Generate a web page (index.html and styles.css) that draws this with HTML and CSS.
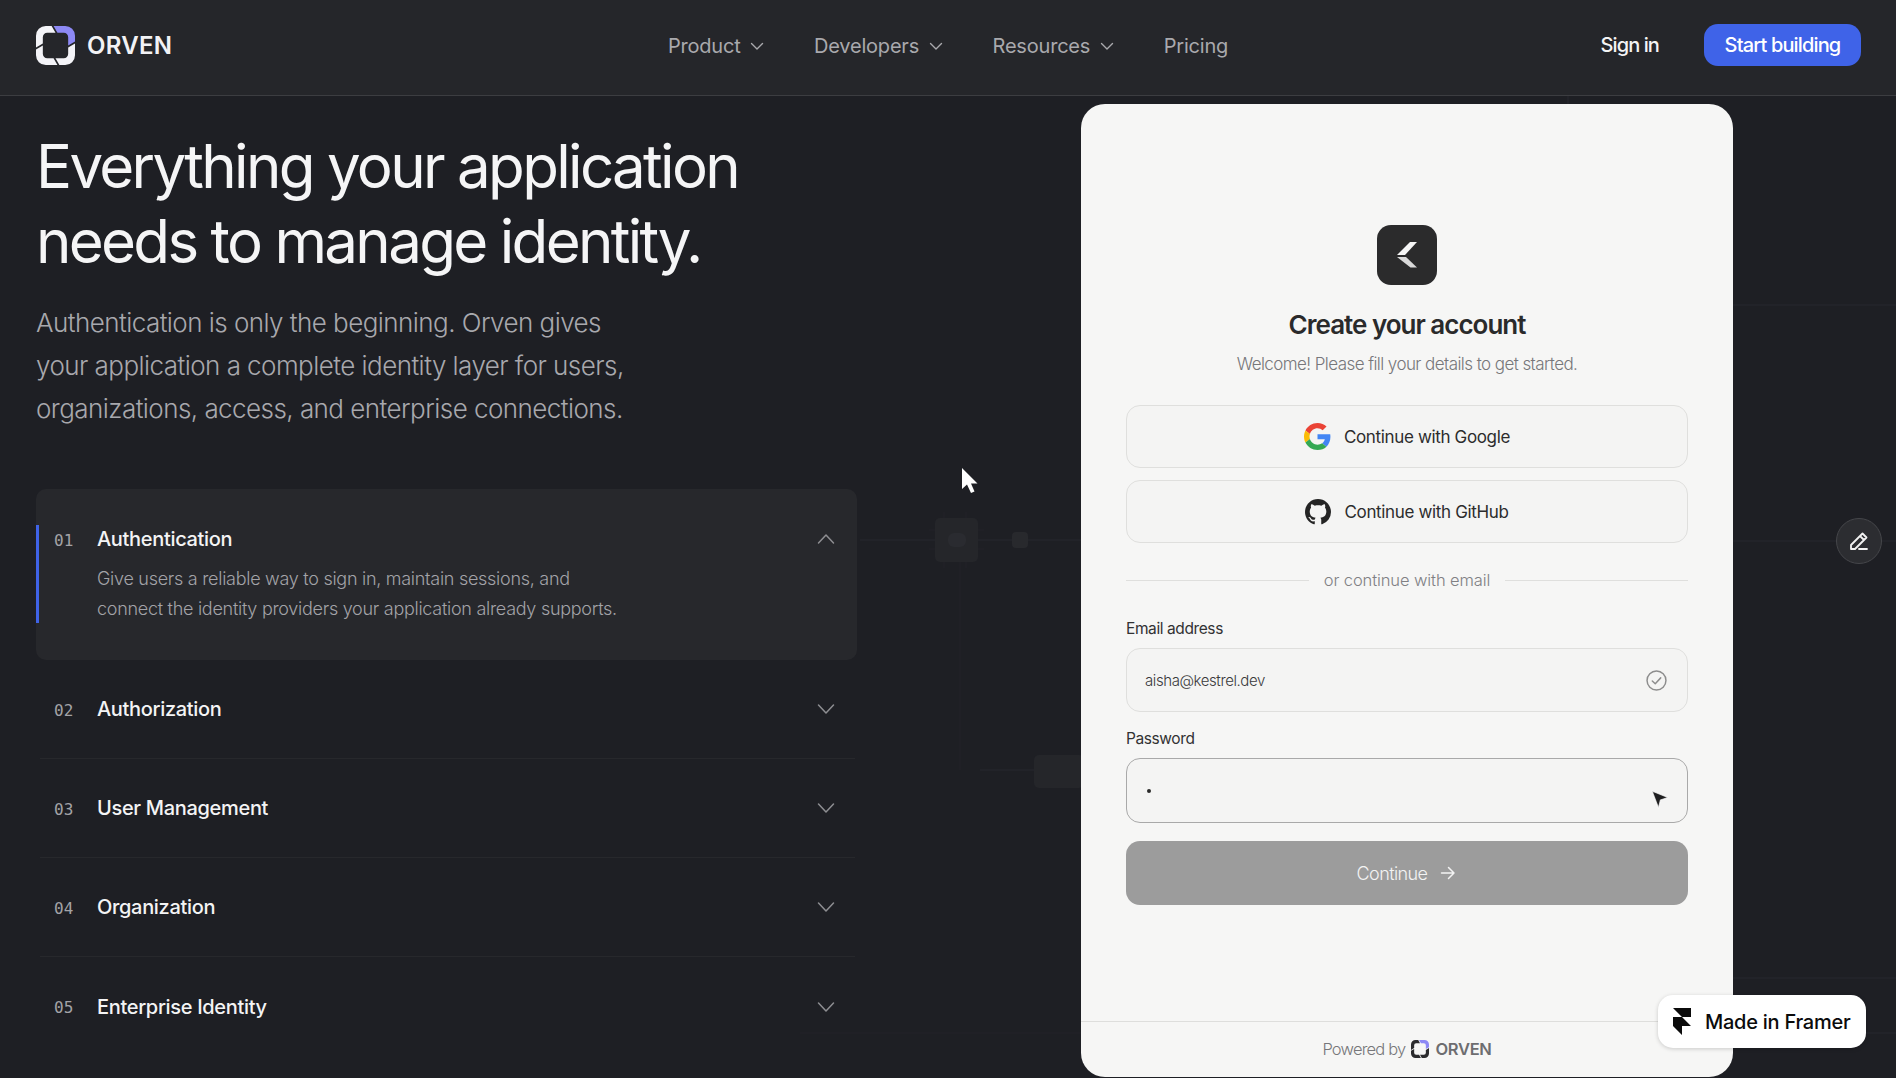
FILE: index.html
```html
<!DOCTYPE html>
<html lang="en">
<head>
<meta charset="utf-8">
<title>Orven</title>
<link rel="stylesheet" href="styles.css">
</head>
<body>
<svg width="0" height="0" class="defs">
  <defs>
    <path id="seg" d="M16 0H10A10 10 0 0 0 0 10V22L7 18V11.5A4.5 4.5 0 0 1 11.5 7H20Z"/>
    <symbol id="chev" viewBox="0 0 16 16"><path d="M2.5 5.5 8 11l5.5-5.5" fill="none" stroke="currentColor" stroke-width="1.4" stroke-linecap="round" stroke-linejoin="round"/></symbol>
    <symbol id="chev-lg" viewBox="0 0 20 20"><path d="M2.5 6 10 14l7.5-8" fill="none" stroke="currentColor" stroke-width="1.5" stroke-linecap="round" stroke-linejoin="round"/></symbol>
  </defs>
</svg>
<div class="page">
  <svg class="decor" viewBox="0 0 1896 1078" width="1896" height="1078" aria-hidden="true">
    <g stroke="#25262b" fill="none" stroke-width="1.5">
      <path d="M860 540H1081M1733 541H1896M1733 305H1896M1733 978H1896M1733 1033H1896M980 770H1034M1568 96V104"/>
    </g>
    <g stroke="#222328" fill="none" stroke-width="1">
      <path d="M960 562V770M800 1033H1081M944 512V568M966 512V568M929 530H984M929 549H984"/>
    </g>
    <rect x="935" y="518" width="43" height="44" rx="5" fill="#25262a"/>
    <rect x="948" y="533" width="18" height="14" rx="6" fill="#2a2b30"/>
    <rect x="1012" y="532" width="16" height="16" rx="4" fill="#28292d"/>
    <rect x="1034" y="755" width="50" height="33" rx="5" fill="#25262a"/>
  </svg>

  <header class="nav">
    <a class="brand">
      <svg class="logo" viewBox="0 0 40 40">
        <use href="#seg" fill="#f4f4f8"/>
        <use href="#seg" fill="#8d89f5" transform="rotate(90 20 20)"/>
        <use href="#seg" fill="#f4f4f8" transform="rotate(180 20 20)"/>
        <use href="#seg" fill="#f4f4f8" transform="rotate(270 20 20)"/>
      </svg>
      <span class="brand-name">ORVEN</span>
    </a>
    <nav class="links">
      <a class="link">Product <svg class="chev"><use href="#chev"/></svg></a>
      <a class="link">Developers <svg class="chev"><use href="#chev"/></svg></a>
      <a class="link">Resources <svg class="chev"><use href="#chev"/></svg></a>
      <a class="link">Pricing</a>
    </nav>
    <div class="actions">
      <a class="signin">Sign in</a>
      <a class="start">Start building</a>
    </div>
  </header>

  <main class="main">
    <section class="left">
      <h1 class="hero">Everything your application<br>needs to manage identity.</h1>
      <p class="lede">Authentication is only the beginning. Orven gives<br>your application a complete identity layer for users,<br>organizations, access, and enterprise connections.</p>
      <div class="accordion">
        <article class="panel">
          <div class="panel-inner">
            <div class="row-head">
              <span class="num">01</span>
              <span class="row-title">Authentication</span>
              <svg class="row-chev up"><use href="#chev-lg"/></svg>
            </div>
            <p class="row-desc">Give users a reliable way to sign in, maintain sessions, and<br>connect the identity providers your application already supports.</p>
          </div>
        </article>
        <article class="row"><div class="row-head"><span class="num">02</span><span class="row-title">Authorization</span><svg class="row-chev"><use href="#chev-lg"/></svg></div></article>
        <article class="row"><div class="row-head"><span class="num">03</span><span class="row-title">User Management</span><svg class="row-chev"><use href="#chev-lg"/></svg></div></article>
        <article class="row"><div class="row-head"><span class="num">04</span><span class="row-title">Organization</span><svg class="row-chev"><use href="#chev-lg"/></svg></div></article>
        <article class="row"><div class="row-head"><span class="num">05</span><span class="row-title">Enterprise Identity</span><svg class="row-chev"><use href="#chev-lg"/></svg></div></article>
      </div>
    </section>

    <section class="card">
      <div class="card-body">
        <div class="tile">
          <svg viewBox="0 0 20 26" width="20" height="26"><path d="M20 0H13L0 13H8Z" fill="#f5f5f5"/><path d="M0 15H9L20 25.5H13.5Z" fill="#d9d9d9"/></svg>
        </div>
        <h2 class="card-title">Create your account</h2>
        <p class="card-sub">Welcome! Please fill your details to get started.</p>
        <a class="oauth">
          <svg class="oauth-g" viewBox="0 0 48 48"><path fill="#EA4335" d="M24 9.5c3.54 0 6.71 1.22 9.21 3.6l6.85-6.85C35.9 2.38 30.47 0 24 0 14.62 0 6.51 5.38 2.56 13.22l7.98 6.19C12.43 13.72 17.74 9.5 24 9.5z"/><path fill="#4285F4" d="M46.98 24.55c0-1.57-.15-3.09-.38-4.55H24v9.02h12.94c-.58 2.96-2.26 5.48-4.78 7.18l7.73 6c4.51-4.18 7.09-10.36 7.09-17.65z"/><path fill="#FBBC05" d="M10.53 28.59c-.48-1.45-.76-2.99-.76-4.59s.27-3.14.76-4.59l-7.98-6.19C.92 16.46 0 20.12 0 24c0 3.88.92 7.54 2.56 10.78l7.97-6.19z"/><path fill="#34A853" d="M24 48c6.48 0 11.93-2.13 15.89-5.81l-7.73-6c-2.15 1.45-4.92 2.3-8.16 2.3-6.26 0-11.57-4.22-13.47-9.91l-7.98 6.19C6.51 42.62 14.62 48 24 48z"/></svg>
          <span>Continue with Google</span>
        </a>
        <a class="oauth">
          <svg class="oauth-h" viewBox="0 0 16 16"><path fill="#242424" d="M8 0C3.58 0 0 3.58 0 8c0 3.54 2.29 6.53 5.47 7.59.4.07.55-.17.55-.38 0-.19-.01-.82-.01-1.49-2.01.37-2.53-.49-2.69-.94-.09-.23-.48-.94-.82-1.13-.28-.15-.68-.52-.01-.53.63-.01 1.08.58 1.23.82.72 1.21 1.87.87 2.33.66.07-.52.28-.87.51-1.07-1.78-.2-3.64-.89-3.64-3.95 0-.87.31-1.59.82-2.15-.08-.2-.36-1.02.08-2.12 0 0 .67-.21 2.2.82.64-.18 1.32-.27 2-.27s1.36.09 2 .27c1.53-1.04 2.2-.82 2.2-.82.44 1.1.16 1.92.08 2.12.51.56.82 1.27.82 2.15 0 3.07-1.87 3.75-3.65 3.95.29.25.54.73.54 1.48 0 1.07-.01 1.93-.01 2.2 0 .21.15.46.55.38A8.01 8.01 0 0 0 16 8c0-4.42-3.58-8-8-8Z"/></svg>
          <span>Continue with GitHub</span>
        </a>
        <div class="divider"><span>or continue with email</span></div>
        <label class="label">Email address</label>
        <div class="field">
          <span class="value">aisha@kestrel.dev</span>
          <svg class="check" viewBox="0 0 20 20"><circle cx="10" cy="10" r="9" fill="none" stroke="#8d8d8d" stroke-width="1.4"/><path d="M6 10.5l2.8 2.6L14 7.5" fill="none" stroke="#8d8d8d" stroke-width="1.4" stroke-linecap="round" stroke-linejoin="round"/></svg>
        </div>
        <label class="label label-pw">Password</label>
        <div class="field field-active">
          <span class="dot"></span>
        </div>
        <a class="continue">Continue
          <svg viewBox="0 0 18 18" width="18" height="18"><path d="M2.5 9h12.5M9.5 3.5 15 9l-5.5 5.5" fill="none" stroke="currentColor" stroke-width="1.5" stroke-linecap="round" stroke-linejoin="round"/></svg>
        </a>
      </div>
      <footer class="card-foot">
        <span>Powered by</span>
        <svg class="foot-logo" viewBox="0 0 40 40">
          <use href="#seg" fill="#2b2b2d"/>
          <use href="#seg" fill="#8d89f5" transform="rotate(90 20 20)"/>
          <use href="#seg" fill="#2b2b2d" transform="rotate(180 20 20)"/>
          <use href="#seg" fill="#2b2b2d" transform="rotate(270 20 20)"/>
        </svg>
        <strong>ORVEN</strong>
      </footer>
    </section>
  </main>

  <svg class="cursor-white" viewBox="0 0 18 28" width="18" height="28"><path d="M1 1V22L6 17.5L10 26L13.5 24.5L10 16.5H16.5Z" fill="#fff"/></svg>
  <svg class="cursor-dark" viewBox="0 0 18 19" width="18" height="19"><path d="M1 1 17 7.5 9.5 10 7.5 18Z" fill="#1f1f20" stroke="#fff" stroke-width="1.2" stroke-opacity=".75" stroke-linejoin="round"/></svg>
  <a class="edit">
    <svg viewBox="0 0 24 24" width="24" height="24"><path d="M15.5 4.5l4 4L8 20H4v-4Z M13 7l4 4 M12 20h8" fill="none" stroke="#f2f2f2" stroke-width="1.8" stroke-linecap="round" stroke-linejoin="round"/></svg>
  </a>
  <a class="framer">
    <svg viewBox="0 0 18 27" width="18" height="27"><path d="M0 0H18V9H9Z M0 9H9L18 18H9V27L0 18Z" fill="#0b0b0b"/></svg>
    <span>Made in Framer</span>
  </a>
</div>
</body>
</html>
```

FILE: styles.css
```css
* { box-sizing: border-box; }
html, body { margin: 0; padding: 0; }
body { background: #1e1f24; font-family: "Inter", "Liberation Sans", sans-serif; color: #fff; overflow: hidden; }
.defs { position: absolute; }
.page { position: relative; width: 1896px; height: 1078px; overflow: hidden; background: #1e1f24; }
.decor { position: absolute; left: 0; top: 0; }

.nav { position: relative; display: grid; grid-template-columns: 1fr auto 1fr; align-items: center; height: 96px; padding: 0 36px; background: #25262a; border-bottom: 1px solid #3c3d41; }
.brand { display: flex; align-items: center; gap: 12px; padding-bottom: 4px; }
.logo { width: 39px; height: 39px; }
.brand-name { font-size: 24px; font-weight: 600; letter-spacing: 0.3px; color: #f2f2f5; }
.links { display: flex; align-items: center; gap: 48.5px; padding-bottom: 4px; }
.link { display: flex; align-items: center; gap: 9px; font-size: 20px; letter-spacing: -0.2px; color: #a9a9ad; }
.chev { width: 16px; height: 16px; color: #a9a9ad; }
.actions { display: flex; justify-content: flex-end; align-items: center; gap: 45px; margin-right: -1px; padding-bottom: 5px; }
.signin { font-size: 20px; font-weight: 500; letter-spacing: -0.9px; color: #f4f4f5; }
.start { display: flex; align-items: center; justify-content: center; width: 157px; height: 42px; border-radius: 14px; background: #3f63e8; font-size: 20px; font-weight: 500; letter-spacing: -0.85px; color: #fff; }

.main { position: relative; display: flex; justify-content: space-between; padding: 0 163px 0 36px; }
.left { width: 821px; padding-top: 33px; }
.hero { margin: 0; font-size: 60px; line-height: 75px; font-weight: 400; letter-spacing: -2.68px; color: #f5f5f6; }
.lede { margin: 22px 0 59px; font-size: 26px; line-height: 43px; font-weight: 300; letter-spacing: -0.55px; color: #a8a8ad; }

.accordion { display: flex; flex-direction: column; }
.panel { height: 171px; padding: 36px 0 0; background: #27282c; border-radius: 10px; }
.panel-inner { height: 98px; padding-left: 15px; border-left: 3px solid #3f63e8; padding-right: 21px; }
.row { display: flex; align-items: center; height: 99px; margin: 0 2px 0 4px; padding: 0 19px 0 14px; border-bottom: 1px solid #27282c; }
.row:last-child { border-bottom: 0; }
.row-head { display: flex; align-items: center; width: 100%; height: 28px; }
.num { width: 43px; padding-top: 2px; font-family: "DejaVu Sans Mono", "Liberation Mono", monospace; font-size: 16px; color: #a3a3a7; }
.row-title { flex: 1; font-size: 20px; font-weight: 500; letter-spacing: -0.32px; color: #f4f4f5; }
.row-chev { width: 20px; height: 20px; color: #8e8e92; }
.row-chev.up { transform: rotate(180deg); }
.row-desc { margin: 11px 0 0 43px; font-size: 18px; line-height: 30px; font-weight: 300; letter-spacing: -0.28px; color: #a3a3a8; }

.card { display: flex; flex-direction: column; width: 652px; height: 973px; margin-top: 8px; background: #f6f6f5; border-radius: 24px; color: #2a2a2b; }
.card-body { flex: 1; display: flex; flex-direction: column; align-items: center; padding: 121px 45px 0; }
.tile { display: flex; align-items: center; justify-content: center; width: 60px; height: 60px; border-radius: 14px; background: #2b2b2c; }
.card-title { margin: 23px 0 0; font-size: 26px; line-height: 34px; font-weight: 600; letter-spacing: -1px; color: #2a2a2b; }
.card-sub { margin: 9px 0 0; font-size: 17px; line-height: 26px; font-weight: 300; letter-spacing: -0.57px; color: #77777a; }
.oauth { display: flex; align-items: center; justify-content: center; gap: 13px; width: 100%; height: 63px; margin-top: 12px; border: 1px solid #dfdfdd; border-radius: 14px; background: #f4f4f3; font-size: 17px; letter-spacing: -0.35px; color: #2c2c2d; }
.card-sub + .oauth { margin-top: 28px; }
.oauth-g { width: 27px; height: 27px; }
.oauth-h { width: 26px; height: 26px; }
.divider { display: flex; align-items: center; gap: 15px; width: 100%; height: 24px; margin-top: 25px; font-size: 16.5px; font-weight: 300; letter-spacing: -0.1px; color: #808084; }
.divider::before, .divider::after { content: ""; flex: 1; height: 1px; background: #dfdfdd; }
.label { align-self: flex-start; margin-top: 26px; font-size: 15.5px; line-height: 22px; letter-spacing: -0.4px; color: #323233; }
.label-pw { margin-top: 16px; }
.field { position: relative; display: flex; align-items: center; justify-content: space-between; width: 100%; height: 64px; margin-top: 8px; padding: 0 20px 0 18px; border: 1px solid #dfdfdd; border-radius: 14px; background: #f4f4f3; }
.field-active { height: 65px; border-color: #a9a9a9; margin-top: 8px; }
.value { font-size: 15px; font-weight: 300; letter-spacing: -0.42px; color: #3a3a3b; }
.check { width: 21px; height: 21px; }
.dot { width: 4px; height: 4px; margin-left: 2px; border-radius: 50%; background: #2a2a2a; }
.continue { display: flex; align-items: center; justify-content: center; gap: 12px; width: 100%; height: 64px; margin-top: 18px; border-radius: 14px; background: #9c9c9c; font-size: 18px; font-weight: 300; letter-spacing: -0.6px; color: #f3f3f3; }
.card-foot { display: flex; align-items: center; justify-content: center; gap: 6px; height: 56px; padding-bottom: 2px; border-top: 1px solid #dededc; font-size: 16.5px; font-weight: 300; letter-spacing: -0.8px; color: #77777a; }
.foot-logo { width: 18px; height: 18px; }
.card-foot strong { font-weight: 600; letter-spacing: -0.3px; color: #6d6d70; }

.cursor-white { position: absolute; left: 961px; top: 467px; }
.cursor-dark { position: absolute; left: 1651px; top: 790px; }
.edit { position: absolute; left: 1836px; top: 518px; display: flex; align-items: center; justify-content: center; width: 46px; height: 46px; border-radius: 50%; background: #2c2d31; border: 1px solid #45464a; }
.framer { position: absolute; left: 1658px; top: 995px; display: flex; align-items: center; gap: 14px; width: 208px; height: 53px; padding-left: 15px; border-radius: 15px; background: #fff; box-shadow: 0 1px 4px rgba(0,0,0,.18); font-size: 20px; font-weight: 500; letter-spacing: -0.25px; color: #0b0b0b; }
```
